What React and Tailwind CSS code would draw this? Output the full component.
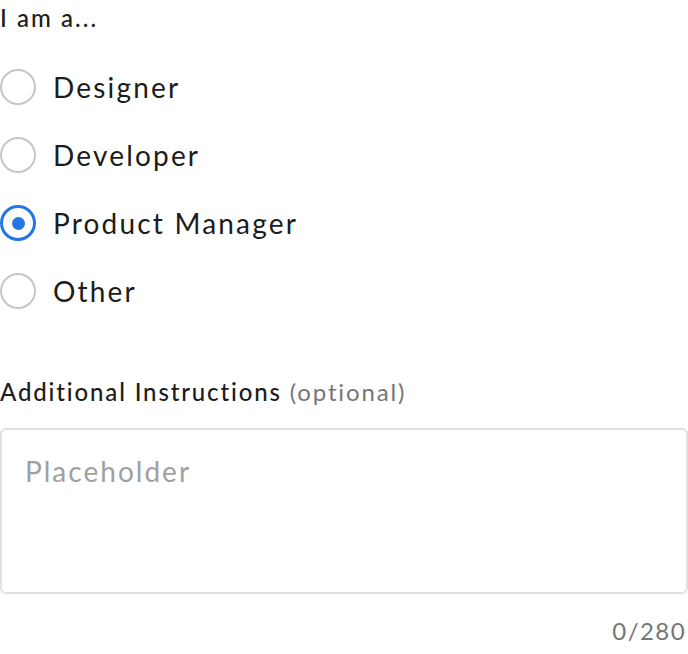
import React, { useState } from "react";

const options = ["Designer", "Developer", "Product Manager", "Other"];

export default function App() {
  const [value, setValue] = useState("Product Manager");
  const [text, setText] = useState("");
  return (
    <div className="w-[688px] h-[654px] bg-white text-[#1c1c1c] font-['Lato','Liberation_Sans',sans-serif]">
      <div className="text-[24px] leading-[36px] font-medium tracking-[0.085em]">I am a...</div>
      <div className="mt-[33px] flex flex-col gap-[32px]">
        {options.map((o) => {
          const sel = o === value;
          return (
            <label key={o} className="flex items-center h-[36px] cursor-pointer" onClick={() => setValue(o)}>
              {sel ? (
                <span className="w-[36px] h-[36px] rounded-full border-[3px] border-[#2475e6] flex items-center justify-center shrink-0">
                  <span className="w-[13px] h-[13px] rounded-full bg-[#2475e6]" />
                </span>
              ) : (
                <span className="w-[36px] h-[36px] rounded-full border-2 border-[#c6c6c6] shrink-0" />
              )}
              <span className="ml-[17px] text-[28px] leading-[36px] tracking-[0.078em]">{o}</span>
            </label>
          );
        })}
      </div>
      <div className="mt-[65px] text-[24px] leading-[36px] tracking-[0.077em]">
        <span className="font-medium">Additional Instructions</span>{" "}
        <span className="text-[#767676]">(optional)</span>
      </div>
      <textarea
        value={text}
        onChange={(e) => setText(e.target.value)}
        placeholder="Placeholder"
        className="mt-[18px] block w-[688px] h-[166px] resize-none rounded-[6px] border-2 border-[#e0e0e0] px-[23px] pt-[23px] pb-[17px] text-[28px] leading-[36px] tracking-[0.072em] placeholder:text-[#a0a0a0] outline-none"
      />
      <div className="mt-[19px] pr-[2px] text-right text-[24px] leading-[36px] tracking-[0.06em] text-[#767676]">{text.length}/280</div>
    </div>
  );
}
